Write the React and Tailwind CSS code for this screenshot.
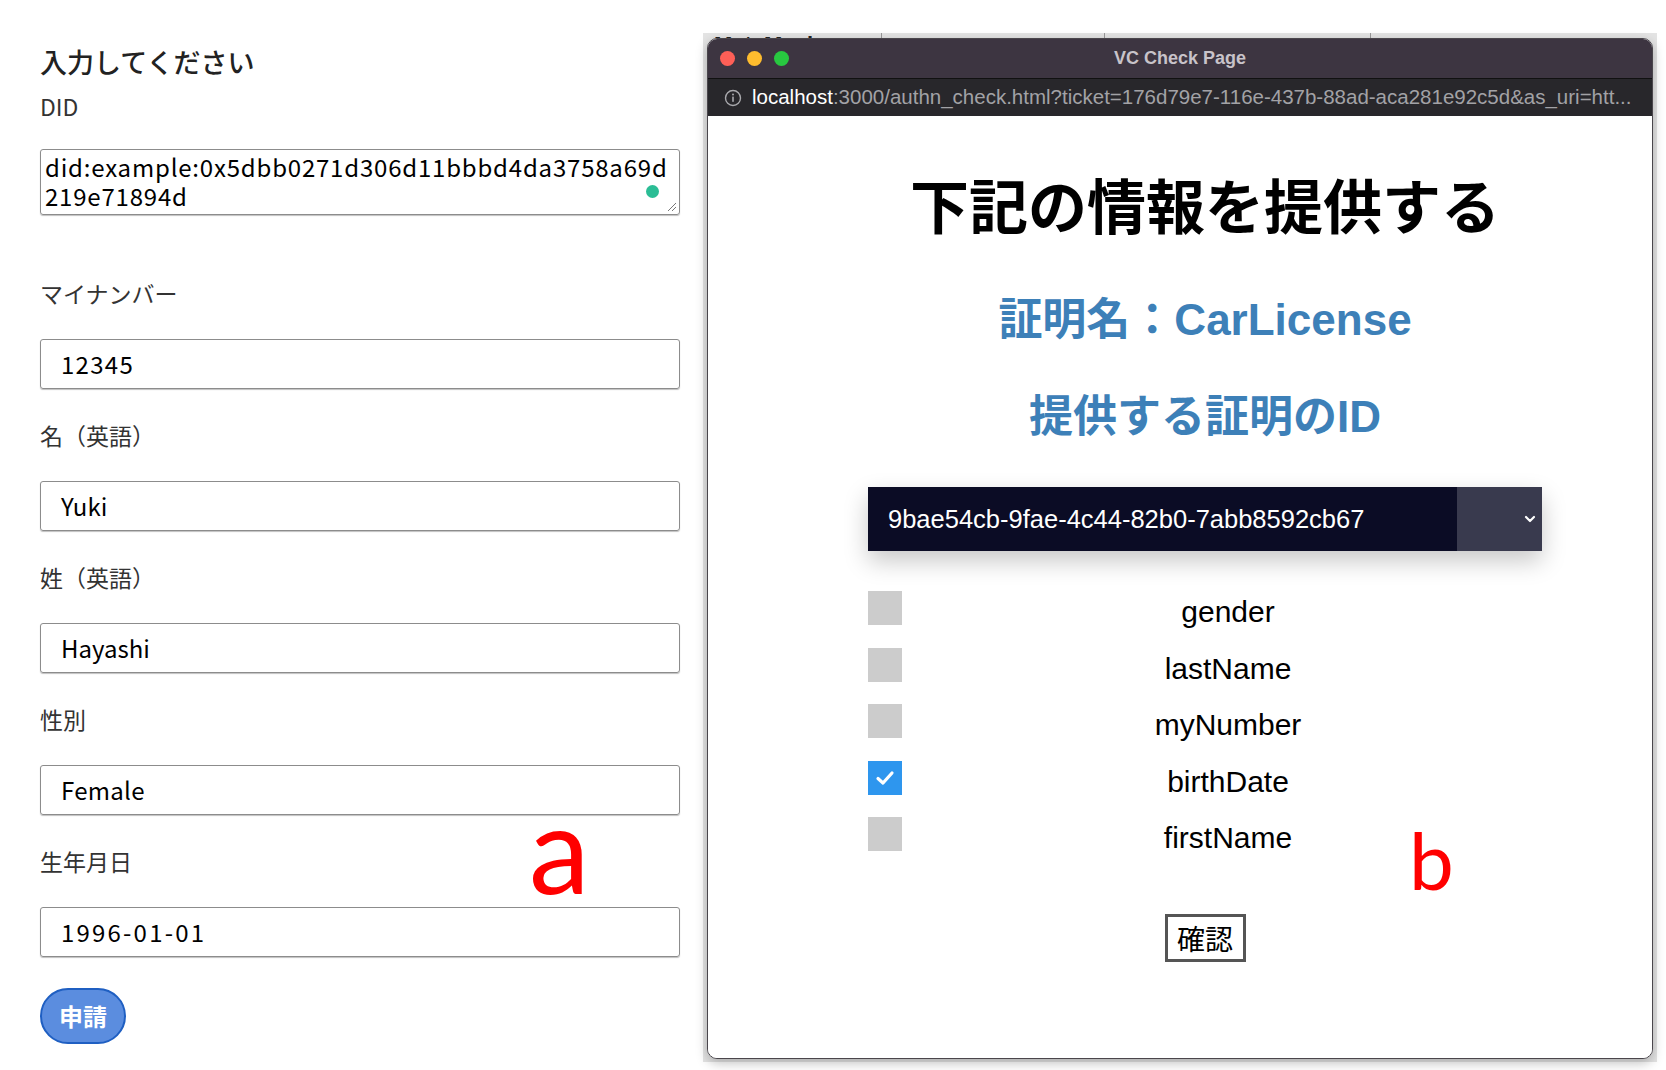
import React from "react";

const jp = { fontFamily: '"Noto Sans CJK JP", "Noto Sans", sans-serif' };
const mac = { fontFamily: '"Liberation Sans", "Noto Sans CJK JP", sans-serif' };

const fields = [
  { label: "マイナンバー", value: "12345", track: "tracking-[1.3px]" },
  { label: "名（英語）", value: "Yuki", track: "" },
  { label: "姓（英語）", value: "Hayashi", track: "" },
  { label: "性別", value: "Female", track: "tracking-[0.3px]" },
  { label: "生年月日", value: "1996-01-01", track: "tracking-[2.2px]" },
];

const claims = [
  { name: "gender", checked: false },
  { name: "lastName", checked: false },
  { name: "myNumber", checked: false },
  { name: "birthDate", checked: true },
  { name: "firstName", checked: false },
];

const Field = ({ label, value, track, children }) => (
  <div className="flex flex-col">
    <div className="relative h-[23px] text-[23px] leading-[23px] text-[#333] mt-[35px]">
      {label}
      {children}
    </div>
    <div className={`mt-[34px] h-[50px] rounded-[3px] border border-[#8c8c8c] shadow-[0_1px_1px_rgba(0,0,0,0.25)] flex items-center pl-[20px] text-[24px] text-black ${track}`}>
      {value}
    </div>
  </div>
);

const FormPanel = () => (
  <div className="w-[703px] shrink-0 pl-[40px] pr-[23px] pt-[48px]" style={jp}>
    <h1 className="text-[27px] leading-[27px] text-[#222] font-medium">入力してください</h1>
    <div className="mt-[20px] text-[23px] leading-[23px] text-[#333]">DID</div>
    <div className="relative mt-[31px] h-[66px] rounded-[3px] border border-[#8c8c8c] shadow-[0_1px_1px_rgba(0,0,0,0.25)] pl-[4px] pt-[2px] text-[24px] leading-[29px] tracking-[0.8px] text-black whitespace-nowrap">
      <div>did:example:0x5dbb0271d306d11bbbd4da3758a69d</div>
      <div>219e71894d</div>
      <span className="absolute right-[20px] top-[35px] w-[13px] h-[13px] rounded-full bg-[#2bbd95]" />
      <svg className="absolute right-[2px] bottom-[2px]" width="10" height="10" viewBox="0 0 10 10">
        <path d="M9 1L1 9M9 5L5 9" stroke="#777" strokeWidth="1" />
      </svg>
    </div>
    <div className="mt-[32px]">
      {fields.map((f, i) => (
        <Field key={i} label={f.label} value={f.value} track={f.track}>
          {i === 4 && (
            <span
              className="absolute left-[489px] top-[-64px] text-[122px] leading-none text-[#ff0000]"
              style={{ fontFamily: 'Lato, "Open Sans", sans-serif' }}
            >
              a
            </span>
          )}
        </Field>
      ))}
    </div>
    <button className="mt-[31px] w-[86px] h-[56px] rounded-full bg-[#5b8ddf] border-2 border-[#1f5fc2] text-white text-[24px] font-bold">
      申請
    </button>
  </div>
);

const Checkbox = ({ checked }) =>
  checked ? (
    <div className="w-[34px] h-[34px] shrink-0 bg-[#2e96ee] flex items-center justify-center">
      <svg width="20" height="16" viewBox="0 0 20 16">
        <path d="M3 8.5L8 13L17 3" fill="none" stroke="white" strokeWidth="3.2" strokeLinecap="round" strokeLinejoin="round" />
      </svg>
    </div>
  ) : (
    <div className="w-[34px] h-[34px] shrink-0 bg-[#cccccc]" />
  );

const Window = () => (
  <div className="flex flex-col h-[1021px] rounded-[10px] overflow-hidden border border-[#4a464c] shadow-[0_4px_12px_rgba(0,0,0,0.25)] bg-white">
    <div className="h-[39px] shrink-0 bg-[#3d3541] grid grid-cols-[1fr_auto_1fr] items-center px-[12px]" style={mac}>
      <div className="flex items-center gap-[12px]">
        <span className="w-[15px] h-[15px] rounded-full bg-[#fe5f57]" />
        <span className="w-[15px] h-[15px] rounded-full bg-[#febc2e]" />
        <span className="w-[15px] h-[15px] rounded-full bg-[#28c840]" />
      </div>
      <div className="text-[18px] font-bold text-[#c8c3c9]">VC Check Page</div>
      <div />
    </div>
    <div className="h-[38px] shrink-0 bg-[#28272b] border-t border-[#111] flex items-center pl-[16px] pr-[14px] gap-[10px] text-[20.5px] whitespace-nowrap overflow-hidden" style={mac}>
      <svg width="18" height="18" viewBox="0 0 18 18" className="shrink-0">
        <circle cx="9" cy="9" r="7.5" fill="none" stroke="#a9a9ad" strokeWidth="1.4" />
        <rect x="8.2" y="7.6" width="1.6" height="5.2" fill="#a9a9ad" />
        <circle cx="9" cy="5.4" r="1" fill="#a9a9ad" />
      </svg>
      <div className="truncate">
        <span className="text-white">localhost</span>
        <span className="text-[#a2a2a6]">:3000/authn_check.html?ticket=176d79e7-116e-437b-88ad-aca281e92c5d&as_uri=htt...</span>
      </div>
    </div>
    <div className="flex-1 bg-white flex flex-col items-center pl-[50px]" style={mac}>
      <h1 className="mt-[58px] text-[59px] leading-[59px] font-bold text-black" style={jp}>
        下記の情報を提供する
      </h1>
      <h2 className="mt-[65px] text-[44px] leading-[44px] font-bold text-[#3d80b8]">証明名：CarLicense</h2>
      <h2 className="mt-[53px] text-[44px] leading-[44px] font-bold text-[#3d80b8]">提供する証明のID</h2>
      <div className="mt-[48px] w-[674px] h-[64px] flex shadow-[0_10px_24px_rgba(0,0,0,0.22)]">
        <div className="flex-1 bg-[#0b0c25] flex items-center pl-[20px] text-[25.5px] text-white">
          9bae54cb-9fae-4c44-82b0-7abb8592cb67
        </div>
        <div className="w-[85px] bg-[#393a4e] flex items-center justify-end pr-[6px]">
          <svg width="12" height="8" viewBox="0 0 12 8">
            <path d="M2 2L6 6L10 2" fill="none" stroke="white" strokeWidth="2.2" strokeLinecap="round" strokeLinejoin="round" />
          </svg>
        </div>
      </div>
      <div className="mt-[40px] w-[674px] flex flex-col gap-[22.5px]">
        {claims.map((c) => (
          <div key={c.name} className="flex items-center h-[34px]">
            <Checkbox checked={c.checked} />
            <div className="flex-1 text-center pl-[12px] pt-[8px] text-[30px] leading-none text-black">{c.name}</div>
          </div>
        ))}
      </div>
      <button className="mt-[63px] w-[81px] h-[48px] border-[3px] border-[#555] bg-white text-[28px] leading-none text-black" style={jp}>
        確認
      </button>
    </div>
  </div>
);

export default function App() {
  return (
    <div className="relative w-[1666px] h-[1070px] bg-white overflow-hidden flex items-start">
      <FormPanel />
      <div className="relative mt-[33px] w-[954px] h-[1029px] bg-[#e4e4e4] px-[4px] flex flex-col">
        <div className="h-[5px] shrink-0 flex overflow-hidden text-[22px] font-bold leading-[22px] text-[#222]" style={mac}>
          <div className="w-[175px] border-r border-[#999] pl-[7px] pt-[1px]">MetaMask</div>
          <div className="w-[223px] border-r border-[#999]" />
          <div className="w-[266px] border-r border-[#999]" />
        </div>
        <Window />
        <span
          className="absolute left-[706px] top-[786px] text-[80px] leading-none text-[#ff0000]"
          style={{ fontFamily: 'Lato, "Open Sans", sans-serif' }}
        >
          b
        </span>
      </div>
    </div>
  );
}
